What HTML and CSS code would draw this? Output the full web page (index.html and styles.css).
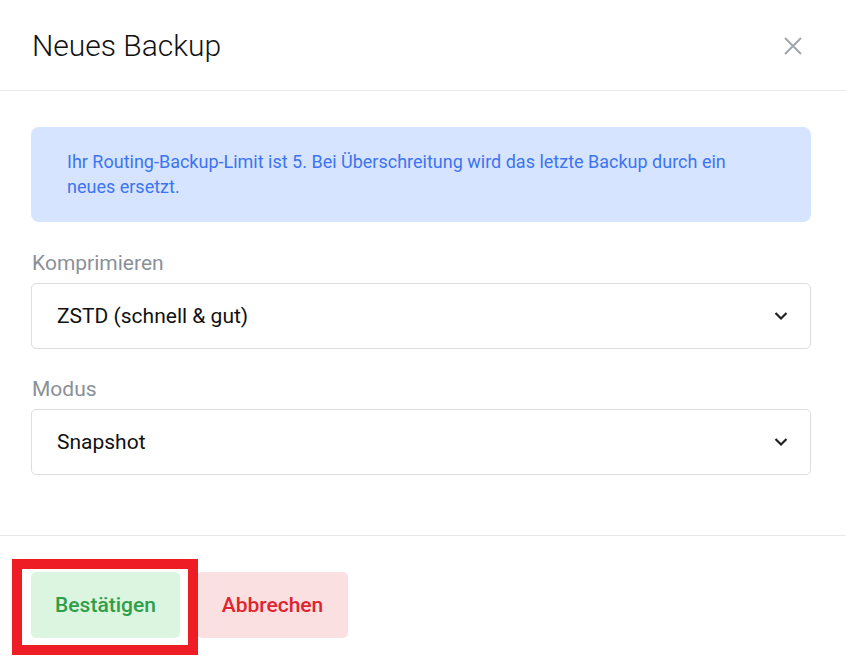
FILE: index.html
```html
<!DOCTYPE html>
<html lang="de">
<head>
<meta charset="utf-8">
<title>Neues Backup</title>
<link rel="stylesheet" href="styles.css">
</head>
<body>
<div class="modal">
  <div class="modal-header">
    <h1 class="modal-title">Neues Backup</h1>
    <button class="close-btn" aria-label="Schließen">
      <svg width="18" height="18" viewBox="0 0 18 18"><path d="M1 1 L17 17 M17 1 L1 17" stroke="#a0a5ad" stroke-width="2" fill="none"/></svg>
    </button>
  </div>
  <div class="modal-body">
    <div class="alert">Ihr Routing-Backup-Limit ist 5. Bei Überschreitung wird das letzte Backup durch ein neues ersetzt.</div>
    <div class="field">
      <label class="field-label">Komprimieren</label>
      <div class="select">
        <span>ZSTD (schnell &amp; gut)</span>
        <svg class="chevron" width="14" height="10" viewBox="0 0 14 10"><path d="M1.5 2 L7 7.5 L12.5 2" stroke="#222" stroke-width="2.2" fill="none"/></svg>
      </div>
    </div>
    <div class="field">
      <label class="field-label">Modus</label>
      <div class="select">
        <span>Snapshot</span>
        <svg class="chevron" width="14" height="10" viewBox="0 0 14 10"><path d="M1.5 2 L7 7.5 L12.5 2" stroke="#222" stroke-width="2.2" fill="none"/></svg>
      </div>
    </div>
  </div>
  <div class="modal-footer">
    <div class="btn-wrap">
      <button class="btn btn-confirm">Bestätigen</button>
      <span class="highlight"></span>
    </div>
    <button class="btn btn-cancel">Abbrechen</button>
  </div>
</div>
</body>
</html>
```
FILE: styles.css
```css
* { box-sizing: border-box; }
html, body { margin: 0; padding: 0; background: #fff; }
body { font-family: Roboto, "Noto Sans", sans-serif; color: #111; }
.modal { width: 846px; }
.modal-header {
  height: 91px;
  border-bottom: 1px solid #e8e8e8;
  display: flex;
  align-items: center;
  justify-content: space-between;
  padding: 1px 44px 0 32px;
}
.modal-title {
  margin: 0;
  font-size: 30px;
  font-weight: 300;
  color: #111;
  letter-spacing: 0;
}
.close-btn {
  border: 0; background: none; padding: 0; margin: 0;
  width: 18px; height: 18px; display: flex;
}
.modal-body {
  padding: 36px 35px 60px 31px;
  border-bottom: 1px solid #e8e8e8;
}
.alert {
  background: #d6e4ff;
  color: #3d74f0;
  border-radius: 8px;
  padding: 22px 36px 23px 36px;
  font-size: 18px;
  line-height: 25px;
  margin-bottom: 28px;
}
.field { margin-bottom: 27px; }
.field:last-child { margin-bottom: 0; }
.field-label {
  display: block;
  font-size: 21px;
  color: #8b9098;
  line-height: 26px;
  margin: 0 0 7px 1px;
}
.select {
  height: 66px;
  border: 1px solid #dedede;
  border-radius: 5px;
  display: flex;
  align-items: center;
  justify-content: space-between;
  padding: 0 22px 0 25px;
  font-size: 21px;
  color: #111;
}
.modal-footer {
  display: flex;
  gap: 17px;
  padding: 36px 31px 30px;
}
.btn-wrap { position: relative; display: flex; }
.btn {
  border: 0;
  border-radius: 5px;
  height: 66px;
  font-family: Roboto, sans-serif;
  font-size: 21px;
  font-weight: 500;
  padding: 0;
  cursor: pointer;
}
.btn-confirm { background: #dcf5e0; color: #2e9e48; width: 149px; }
.btn-cancel { background: #fae0e1; color: #e0242f; width: 151px; }
.highlight {
  position: absolute;
  left: -19px; top: -13px; right: -18px; bottom: -17px;
  border: 10px solid #ee1c25;
  pointer-events: none;
}
```
